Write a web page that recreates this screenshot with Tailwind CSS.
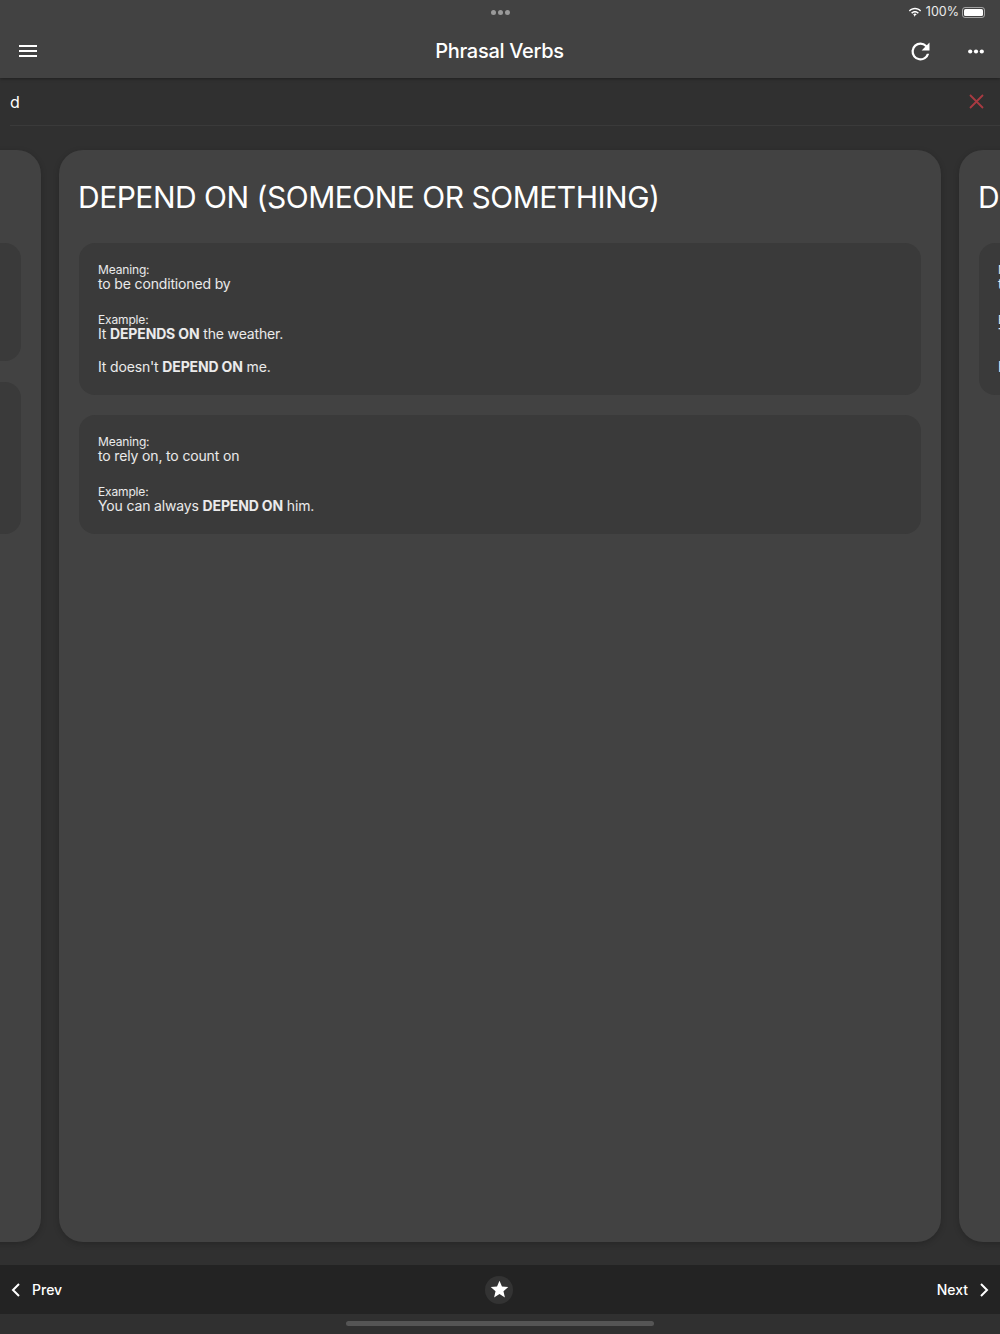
<!DOCTYPE html>
<html lang="en">
<head>
    <meta charset="UTF-8">
    <title>Phrasal Verbs</title>
    <script src="https://cdn.jsdelivr.net/npm/@tailwindcss/browser@4"></script>
</head>
<body class="bg-[#303030] font-['Inter',sans-serif] text-white">
    <div class="w-[1000px] h-[1334px] flex flex-col overflow-hidden">
        <!-- Header -->
        <header class="h-[78px] bg-[#424242] shadow-[0_1px_3px_rgba(0,0,0,0.35)] relative z-10 shrink-0">
            <div class="h-[24px] relative flex justify-center items-center">
                <div class="flex gap-[2px]">
                    <span class="w-[5px] h-[5px] rounded-full bg-[#9a9a9a]"></span>
                    <span class="w-[5px] h-[5px] rounded-full bg-[#9a9a9a]"></span>
                    <span class="w-[5px] h-[5px] rounded-full bg-[#9a9a9a]"></span>
                </div>
                <div class="absolute right-[15px] top-[4px] flex items-center gap-[4px] text-[12.500px] leading-4 text-white/90">
                    <svg width="14" height="11" viewBox="0 0 16 12" fill="#fff"><path d="M8 2.400c2.200 0 4.300.9 5.900 2.400l1.100-1.200C13.100 1.800 10.600.7 8 .7S2.900 1.800 1 3.600l1.100 1.200C3.700 3.300 5.800 2.400 8 2.400zM8 6c1.200 0 2.400.5 3.300 1.300l1.100-1.200C11.200 5 9.600 4.300 8 4.300S4.800 5 3.600 6.100l1.100 1.200C5.600 6.500 6.800 6 8 6zm0 3.600L10 8c-.5-.5-1.300-.8-2-.8s-1.500.3-2 .8l2 3z"/></svg>
                    <span>100%</span>
                    <div class="w-[23px] h-[11px] rounded-[3px] border border-white/50 p-[1px] ml-[-1px]"><div class="w-full h-full bg-white rounded-[1.5px]"></div></div>
                </div>
            </div>
            <div class="h-[54px] flex items-center justify-between pl-[19px] pr-[16px]">
                <svg width="18" height="12" viewBox="0 0 18 12" fill="#fff"><rect y="0" width="18" height="2"/><rect y="5" width="18" height="2"/><rect y="10" width="18" height="2"/></svg>
                <h1 class="text-[20px] font-medium tracking-[-0.3px] ml-[55px]">Phrasal Verbs</h1>
                <div class="flex items-center gap-[34px]">
                    <svg width="27" height="27" viewBox="0 0 24 24" fill="#fff"><path d="M17.650 6.350A7.960 7.960 0 0 0 12 4a8 8 0 1 0 7.730 10h-2.080A6 6 0 1 1 12 6c1.660 0 3.140.69 4.220 1.780L13 11h7V4l-2.350 2.350z"/></svg>
                    <svg width="16" height="5" viewBox="0 0 16 5" fill="#fff"><circle cx="2.200" cy="2.500" r="2.100"/><circle cx="8" cy="2.500" r="2.100"/><circle cx="13.800" cy="2.500" r="2.100"/></svg>
                </div>
            </div>
        </header>

        <!-- Search -->
        <div class="h-[48px] ml-[10px] border-b border-[#3a3a3a] flex items-center justify-between shrink-0">
            <span class="text-[16px]">d</span>
            <svg class="mr-[16px]" width="15" height="15" viewBox="0 0 15 15" stroke="#a83a42" stroke-width="1.800" fill="none"><path d="M1 1l13 13M14 1L1 14"/></svg>
        </div>

        <!-- Cards -->
        <div class="flex-1 flex gap-[18px] justify-center mt-[24px] mb-[23px] min-h-0">
            <div class="w-[882px] shrink-0 bg-[#424242] rounded-[24px] shadow-[0_2px_6px_rgba(0,0,0,0.2)] p-[20px] pt-[93px] overflow-hidden">
                <div class="w-full h-[118px] bg-[#3a3a3a] rounded-[16px] mb-[21px]"></div>
                <div class="w-full h-[152px] bg-[#3a3a3a] rounded-[16px]"></div>
            </div>
            <div class="w-[882px] shrink-0 bg-[#424242] rounded-[24px] shadow-[0_2px_6px_rgba(0,0,0,0.2)] p-[20px]">
                <h2 class="text-[30px] leading-[36px] tracking-[-0.5px] mt-[9px] mb-[28px] -ml-[1px]">DEPEND ON (SOMEONE OR SOMETHING)</h2>
                <div class="bg-[#3a3a3a] rounded-[16px] px-[19px] pt-[19px] pb-[20px] mb-[20px] text-[14px] leading-[17px] tracking-[-0.15px] text-white/90">
                    <p class="text-[12px] leading-[16px] mb-[-3px]">Meaning:</p>
                    <p>to be conditioned by</p>
                    <p class="text-[12px] leading-[16px] mb-[-3px] mt-[20px]">Example:</p>
                    <p>It <b>DEPENDS ON</b> the weather.</p>
                    <p class="mt-[16px]">It doesn't <b>DEPEND ON</b> me.</p>
                </div>
                <div class="bg-[#3a3a3a] rounded-[16px] px-[19px] pt-[19px] pb-[20px] text-[14px] leading-[17px] tracking-[-0.15px] text-white/90">
                    <p class="text-[12px] leading-[16px] mb-[-3px]">Meaning:</p>
                    <p>to rely on, to count on</p>
                    <p class="text-[12px] leading-[16px] mb-[-3px] mt-[20px]">Example:</p>
                    <p>You can always <b>DEPEND ON</b> him.</p>
                </div>
            </div>
            <div class="w-[882px] shrink-0 bg-[#424242] rounded-[24px] shadow-[0_2px_6px_rgba(0,0,0,0.2)] p-[20px] overflow-hidden">
                <h2 class="text-[30px] leading-[36px] mt-[9px] mb-[28px] -ml-[1px]">D</h2>
                <div class="bg-[#3a3a3a] rounded-[16px] px-[19px] py-[19px] h-[152px] text-[14px] leading-[17px] text-white/90">
                    <p class="text-[12px] leading-[16px] mb-[-3px]">Meaning:</p>
                    <p>to be</p>
                    <p class="text-[12px] leading-[16px] mb-[-3px] mt-[20px]">Example:</p>
                    <p>The</p>
                    <p class="mt-[16px]">He</p>
                </div>
            </div>
        </div>

        <!-- Bottom bar -->
        <div class="h-[49px] bg-[#232323] flex items-center justify-between px-[11px] shrink-0 text-[14px] font-medium">
            <div class="flex items-center gap-[11px] w-[120px]">
                <svg width="10" height="14" viewBox="0 0 10 14" fill="none" stroke="#fff" stroke-width="2"><path d="M8 1L2 7l6 6"/></svg>
                <span>Prev</span>
            </div>
            <div class="w-[28px] h-[28px] -ml-[2px] rounded-full bg-[#333333] flex items-center justify-center">
                <svg width="21" height="21" viewBox="0 0 24 24" fill="#fff"><path d="M12 17.270L18.180 21l-1.640-7.030L22 9.240l-7.190-.61L12 2 9.190 8.630 2 9.240l5.460 4.730L5.820 21z"/></svg>
            </div>
            <div class="flex items-center justify-end gap-[11px] w-[120px]">
                <span>Next</span>
                <svg width="10" height="14" viewBox="0 0 10 14" fill="none" stroke="#fff" stroke-width="2"><path d="M2 1l6 6-6 6"/></svg>
            </div>
        </div>
        <div class="h-[20px] bg-[#303030] flex justify-center items-start pt-[7px] shrink-0">
            <div class="w-[308px] h-[5px] rounded-full bg-[#555555]"></div>
        </div>
    </div>
</body>
</html>
